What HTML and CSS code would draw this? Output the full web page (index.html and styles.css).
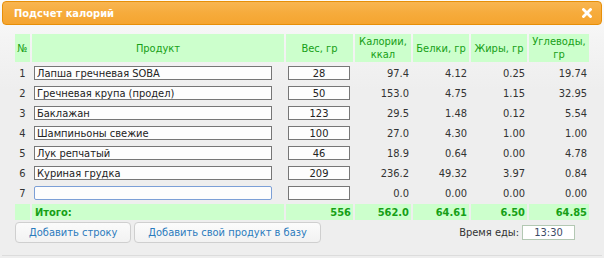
FILE: index.html
```html
<!DOCTYPE html>
<html lang="ru">
<head>
<meta charset="utf-8">
<title>Подсчет калорий</title>
<link rel="stylesheet" href="styles.css">
</head>
<body>
<div class="dialog">
  <div class="titlebar">
    <span class="title">Подсчет калорий</span>
    <span class="close" aria-label="close">
      <svg width="10" height="10" viewBox="0 0 10 10"><path d="M1.5 1.5 L8.5 8.5 M8.5 1.5 L1.5 8.5" stroke="#fff" stroke-width="2.8" stroke-linecap="square"/></svg>
    </span>
  </div>
  <div class="content">
    <table class="calc">
      <thead>
        <tr>
          <th class="c-num">№</th>
          <th class="c-prod">Продукт</th>
          <th class="c-w">Вес, гр</th>
          <th class="c-kcal">Калории,<br>ккал</th>
          <th class="c-p">Белки, гр</th>
          <th class="c-f">Жиры, гр</th>
          <th class="c-c">Углеводы,<br>гр</th>
        </tr>
      </thead>
      <tbody>
        <tr><td class="num">1</td><td class="prod"><input class="in-prod" value="Лапша гречневая SOBA"></td><td class="wt"><input class="in-w" value="28"></td><td class="val">97.4</td><td class="val">4.12</td><td class="val">0.25</td><td class="val">19.74</td></tr>
        <tr><td class="num">2</td><td class="prod"><input class="in-prod" value="Гречневая крупа (продел)"></td><td class="wt"><input class="in-w" value="50"></td><td class="val">153.0</td><td class="val">4.75</td><td class="val">1.15</td><td class="val">32.95</td></tr>
        <tr><td class="num">3</td><td class="prod"><input class="in-prod" value="Баклажан"></td><td class="wt"><input class="in-w" value="123"></td><td class="val">29.5</td><td class="val">1.48</td><td class="val">0.12</td><td class="val">5.54</td></tr>
        <tr><td class="num">4</td><td class="prod"><input class="in-prod" value="Шампиньоны свежие"></td><td class="wt"><input class="in-w" value="100"></td><td class="val">27.0</td><td class="val">4.30</td><td class="val">1.00</td><td class="val">1.00</td></tr>
        <tr><td class="num">5</td><td class="prod"><input class="in-prod" value="Лук репчатый"></td><td class="wt"><input class="in-w" value="46"></td><td class="val">18.9</td><td class="val">0.64</td><td class="val">0.00</td><td class="val">4.78</td></tr>
        <tr><td class="num">6</td><td class="prod"><input class="in-prod" value="Куриная грудка"></td><td class="wt"><input class="in-w" value="209"></td><td class="val">236.2</td><td class="val">49.32</td><td class="val">3.97</td><td class="val">0.84</td></tr>
        <tr><td class="num">7</td><td class="prod"><input class="in-prod in-focus" value=""></td><td class="wt"><input class="in-w" value=""></td><td class="val">0.0</td><td class="val">0.00</td><td class="val">0.00</td><td class="val">0.00</td></tr>
      </tbody>
      <tfoot>
        <tr><td class="tot"></td><td class="tot tot-label">Итого:</td><td class="tot tot-val">556</td><td class="tot tot-val">562.0</td><td class="tot tot-val">64.61</td><td class="tot tot-val">6.50</td><td class="tot tot-val">64.85</td></tr>
      </tfoot>
    </table>
    <div class="actions">
      <button class="btn">Добавить строку</button>
      <button class="btn">Добавить свой продукт в базу</button>
      <div class="time-box">
        <span class="time-label">Время еды:</span>
        <input class="time" value="13:30">
      </div>
    </div>
  </div>
  <div class="buttonpane"></div>
</div>
</body>
</html>
```

FILE: styles.css
```css
html, body {
  margin: 0;
  padding: 0;
  background: #eeeeee;
}

body {
  font-family: "DejaVu Sans Condensed", "DejaVu Sans", sans-serif;
  font-size: 11px;
  color: #333;
}

.dialog {
  width: 604px;
  height: 258px;
  box-sizing: border-box;
  padding: 1px 2px 0;
  background: linear-gradient(#fbfbfb 0px, #f4f4f4 40px, #eeeeee 90px);
  overflow: hidden;
}

.titlebar {
  height: 22px;
  border: 1px solid #e78f08;
  border-radius: 4px;
  background: linear-gradient(#f8b551, #f6ab3c 50%, #f5a530);
  display: flex;
  align-items: center;
  justify-content: space-between;
  padding: 0 9px 0 11px;
}

.title {
  color: #fff;
  font-weight: bold;
  font-size: 11px;
}

.close {
  display: flex;
  width: 10px;
  height: 10px;
}

.content {
  padding: 7px 0 0 11px;
}

.calc {
  border-collapse: separate;
  border-spacing: 2px;
  table-layout: fixed;
  width: 578px;
}

.calc th {
  background: #ccffcc;
  color: #16a016;
  font-weight: normal;
  height: 28px;
  padding: 0;
  line-height: 13px;
  text-align: center;
  vertical-align: middle;
}

.c-num { width: 15px; }
.c-prod { width: 252px; }
.c-w { width: 67px; }
.c-kcal { width: 56px; }
.c-p { width: 56px; }
.c-f { width: 56px; }
.c-c { width: 60px; }

.calc td {
  height: 18px;
  padding: 0;
  vertical-align: middle;
}

.num {
  text-align: center;
}

.prod, .wt {
  padding-left: 2px !important;
}

.in-prod, .in-w, .time {
  font: inherit;
  box-sizing: border-box;
  height: 14px;
  border: 1px solid #767676;
  background: #fdfdfd;
  padding: 0 2px;
  margin: 0;
  color: #222;
  display: block;
  outline: none;
}

.in-prod {
  width: 238px;
}

.in-focus {
  border-color: #7c9fd6;
  border-radius: 2px;
}

.in-w {
  width: 62px;
  text-align: center;
}

.val {
  text-align: right;
  padding-right: 2px !important;
}

.calc td.tot {
  height: 16px;
  background: #ccffcc;
  color: #16a016;
  font-weight: bold;
}

.tot-label {
  padding-left: 3px !important;
}

.tot-val {
  text-align: right;
  padding-right: 2px !important;
}

.actions {
  display: flex;
  align-items: center;
  gap: 3px;
  margin-left: 2px;
}

.btn {
  font: inherit;
  height: 21px;
  box-sizing: border-box;
  border: 1px solid #cfcfcf;
  border-radius: 4px;
  background: linear-gradient(#fbfbfb, #f2f2f2);
  color: #2b7bbd;
  padding: 0 13px;
  margin: 0;
}

.time-box {
  margin-left: auto;
  margin-right: 27px;
  display: flex;
  align-items: center;
  gap: 3px;
}

.time-label {
  color: #333;
}

.time {
  width: 53px;
  height: 15px;
  border-color: #b3c8b3;
  background: #fff;
  text-align: center;
  color: #3c4a66;
}

.buttonpane {
  margin-top: 12px;
  border-top: 1px solid #dcdcdc;
}
```
